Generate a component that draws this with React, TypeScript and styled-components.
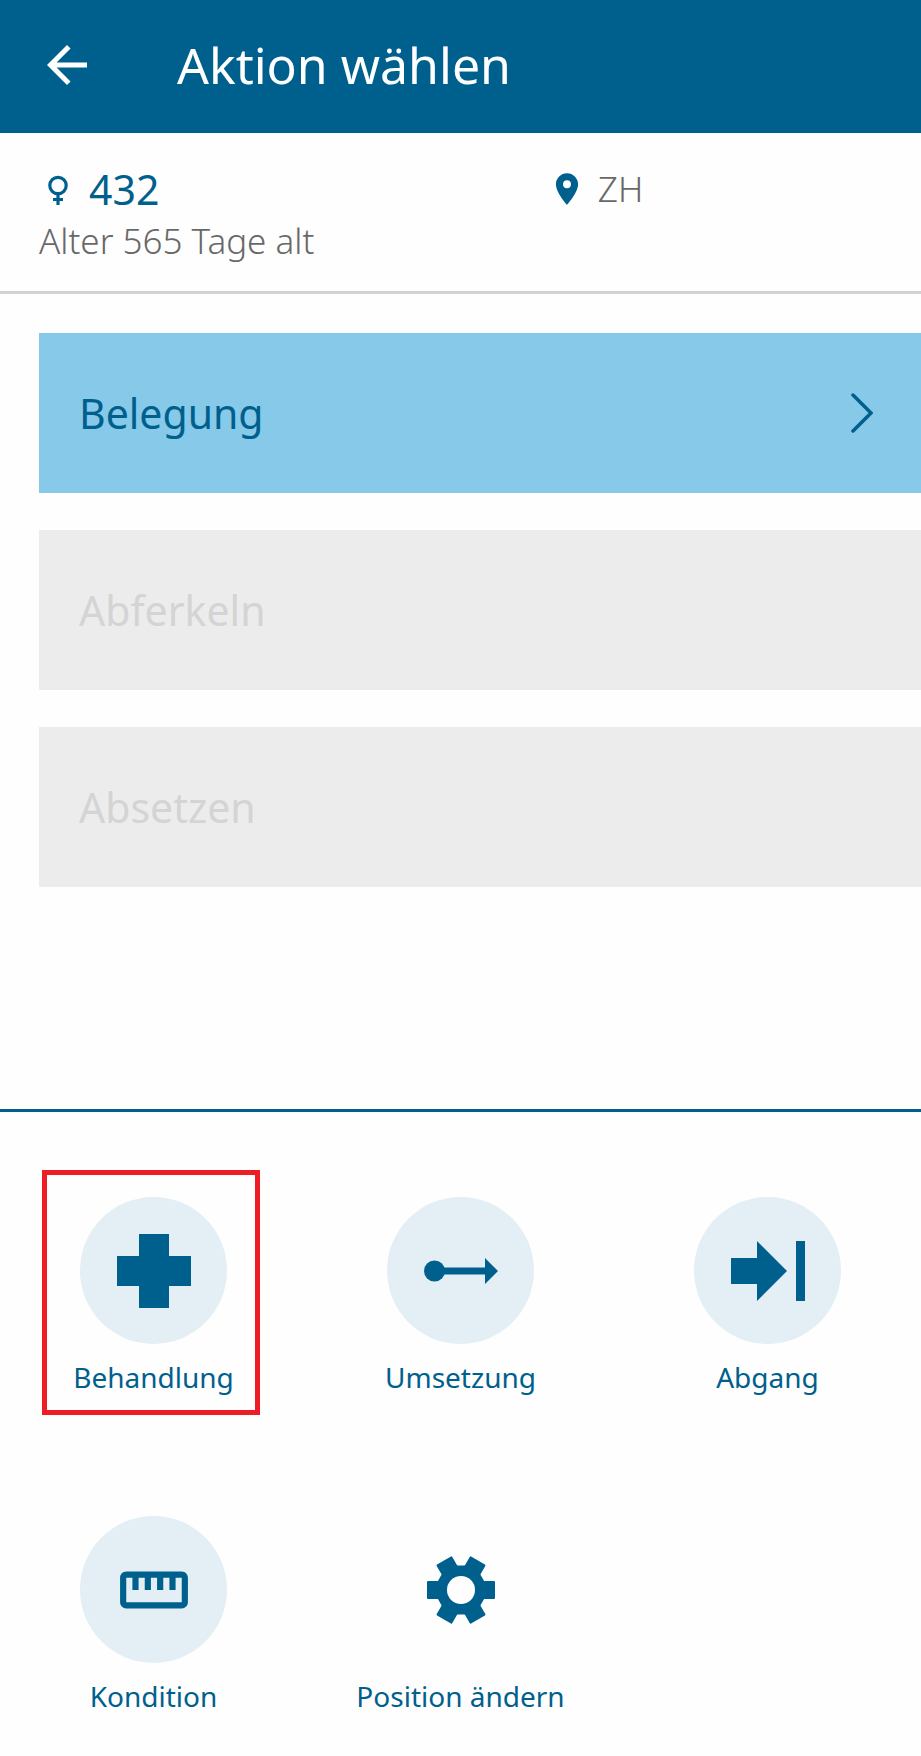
import React from "react";
import styled, { createGlobalStyle } from "styled-components";

const blue = "#00608d";

const GlobalStyle = createGlobalStyle`
  *, *::before, *::after { box-sizing: border-box; }
  body {
    margin: 0;
    background: #fefefe;
    color: ${blue};
    font-family: "Noto Sans", "Open Sans", sans-serif;
  }
  button { font: inherit; border: 0; background: none; padding: 0; margin: 0; color: inherit; cursor: pointer; }
  h1, p { margin: 0; }
  svg { display: block; flex: none; }
`;

const Screen = styled.div`
  display: flex;
  flex-direction: column;
  min-height: 100vh;
`;

const TopBar = styled.header`
  display: flex;
  align-items: center;
  gap: 80px;
  height: 133px;
  padding: 0 37px 4px;
  background: ${blue};
  color: #fff;
`;

const Title = styled.h1`
  font-size: 50px;
  line-height: 64px;
  font-weight: 400;
`;

const AnimalBar = styled.section`
  display: grid;
  grid-template-columns: 15fr 11fr;
  padding: 32px 0 26px 39px;
  border-bottom: 3px solid #d2d2d2;
`;

const AnimalInfo = styled.div`
  display: flex;
  flex-direction: column;
  gap: 4px;
`;

const Line = styled.div`
  display: flex;
  align-items: center;
  height: 48px;
  gap: 12px;
`;

const AnimalNumber = styled.span`
  font-size: 41px;
  line-height: 48px;
`;

const Muted = styled.p`
  font-size: 35px;
  line-height: 48px;
  font-weight: 300;
  color: #686868;
`;

const ActionList = styled.main`
  display: flex;
  flex-direction: column;
  gap: 37px;
  padding: 39px 0 39px 39px;
`;

const ActionCard = styled.button`
  display: flex;
  align-items: center;
  justify-content: space-between;
  height: 160px;
  padding: 0 48px 0 40px;
  background: #87c9e9;
  font-size: 41px;
  line-height: 56px;
  text-align: left;

  &:disabled {
    background: #ececec;
    color: #d4d4d4;
    cursor: default;
  }
`;

const Shortcuts = styled.nav`
  display: grid;
  grid-template-columns: repeat(3, 1fr);
  row-gap: 92px;
  margin-top: auto;
  padding: 58px 0 40px;
  border-top: 3px solid ${blue};
`;

const Shortcut = styled.button`
  position: relative;
  display: flex;
  flex-direction: column;
  align-items: center;
  padding-top: 27px;
  gap: 13px;
  font-size: 28px;
  line-height: 40px;
`;

const Disc = styled.span<{ $plain?: boolean }>`
  display: grid;
  place-items: center;
  width: 147px;
  height: 147px;
  border-radius: 50%;
  background: ${(p) => (p.$plain ? "transparent" : "#e3eff4")};
`;

const Marker = styled.span`
  position: absolute;
  inset: 0 auto auto 42px;
  width: 218px;
  height: 245px;
  border: 5px solid #ee1c25;
  pointer-events: none;
`;

const BackIcon = () => (
  <svg width="60" height="60" viewBox="0 0 24 24" fill="currentColor" aria-hidden="true">
    <path d="M20 11H7.83l5.59-5.59L12 4l-8 8 8 8 1.41-1.41L7.83 13H20z" />
  </svg>
);

const FemaleIcon = () => (
  <svg width="38" height="38" viewBox="0 0 38 38" fill="none" stroke="currentColor" strokeWidth="3.2" aria-hidden="true">
    <circle cx="19" cy="15.5" r="8.2" />
    <path d="M19 23.500v11.500M14 29.500h10" />
  </svg>
);

const PinIcon = () => (
  <svg width="38" height="38" viewBox="0 0 24 24" fill={blue} aria-hidden="true">
    <path d="M12 2C8.130 2 5 5.130 5 9c0 5.250 7 13 7 13s7-7.750 7-13c0-3.870-3.130-7-7-7zm0 9.500a2.500 2.500 0 0 1 0-5 2.500 2.500 0 0 1 0 5z" />
  </svg>
);

const ChevronIcon = () => (
  <svg width="22" height="40" viewBox="0 0 22 40" fill="none" stroke="currentColor" strokeWidth="3.500" strokeLinecap="round" aria-hidden="true">
    <path d="M2 2l18 18L2 38" />
  </svg>
);

const CrossIcon = () => (
  <svg width="74" height="74" viewBox="0 0 74 74" fill="currentColor" aria-hidden="true">
    <path d="M22 0h30v22h22v30H52v22H22V52H0V22h22z" />
  </svg>
);

const MoveIcon = () => (
  <svg width="74" height="74" viewBox="0 0 74 74" fill="currentColor" aria-hidden="true">
    <circle cx="10.500" cy="37" r="10.500" />
    <path d="M18 33.500h43V24l13 13-13 13v-9.500H18z" />
  </svg>
);

const ExitIcon = () => (
  <svg width="74" height="74" viewBox="0 0 74 74" fill="currentColor" aria-hidden="true">
    <path d="M0 24h26V7l30 30-30 30V50H0zM65 7h9v60h-9z" />
  </svg>
);

const RulerIcon = () => (
  <svg width="74" height="74" viewBox="0 0 24 24" fill="currentColor" aria-hidden="true">
    <path d="M21 6H3c-1.100 0-2 .9-2 2v8c0 1.100.9 2 2 2h18c1.100 0 2-.9 2-2V8c0-1.100-.9-2-2-2zm0 10H3V8h2v4h2V8h2v4h2V8h2v4h2V8h2v4h2V8h2z" />
  </svg>
);

const GearIcon = () => (
  <svg width="74" height="74" viewBox="-37 -37 74 74" aria-hidden="true">
    <g fill="currentColor">
      <path d="M28.300 0L14.150 24.500h-28.300L-28.300 0l14.150-24.500h28.300z" />
      {[0, 60, 120].map((angle) => (
        <rect key={angle} x="-34" y="-9" width="68" height="18" rx="1" transform={`rotate(${angle})`} />
      ))}
    </g>
    <circle r="14" fill="#fefefe" />
  </svg>
);

const shortcuts = [
  { label: "Behandlung", icon: <CrossIcon />, marked: true },
  { label: "Umsetzung", icon: <MoveIcon /> },
  { label: "Abgang", icon: <ExitIcon /> },
  { label: "Kondition", icon: <RulerIcon /> },
  { label: "Position ändern", icon: <GearIcon />, plain: true },
];

export default function App() {
  return (
    <Screen>
      <GlobalStyle />
      <TopBar>
        <button type="button" aria-label="Zurück">
          <BackIcon />
        </button>
        <Title>Aktion wählen</Title>
      </TopBar>
      <AnimalBar>
        <AnimalInfo>
          <Line>
            <FemaleIcon />
            <AnimalNumber>432</AnimalNumber>
          </Line>
          <Muted>Alter 565 Tage alt</Muted>
        </AnimalInfo>
        <Line>
          <PinIcon />
          <Muted>ZH</Muted>
        </Line>
      </AnimalBar>
      <ActionList>
        <ActionCard type="button">
          Belegung
          <ChevronIcon />
        </ActionCard>
        <ActionCard type="button" disabled>Abferkeln</ActionCard>
        <ActionCard type="button" disabled>Absetzen</ActionCard>
      </ActionList>
      <Shortcuts>
        {shortcuts.map((item) => (
          <Shortcut key={item.label} type="button">
            <Disc $plain={item.plain}>{item.icon}</Disc>
            {item.label}
            {item.marked && <Marker />}
          </Shortcut>
        ))}
      </Shortcuts>
    </Screen>
  );
}
